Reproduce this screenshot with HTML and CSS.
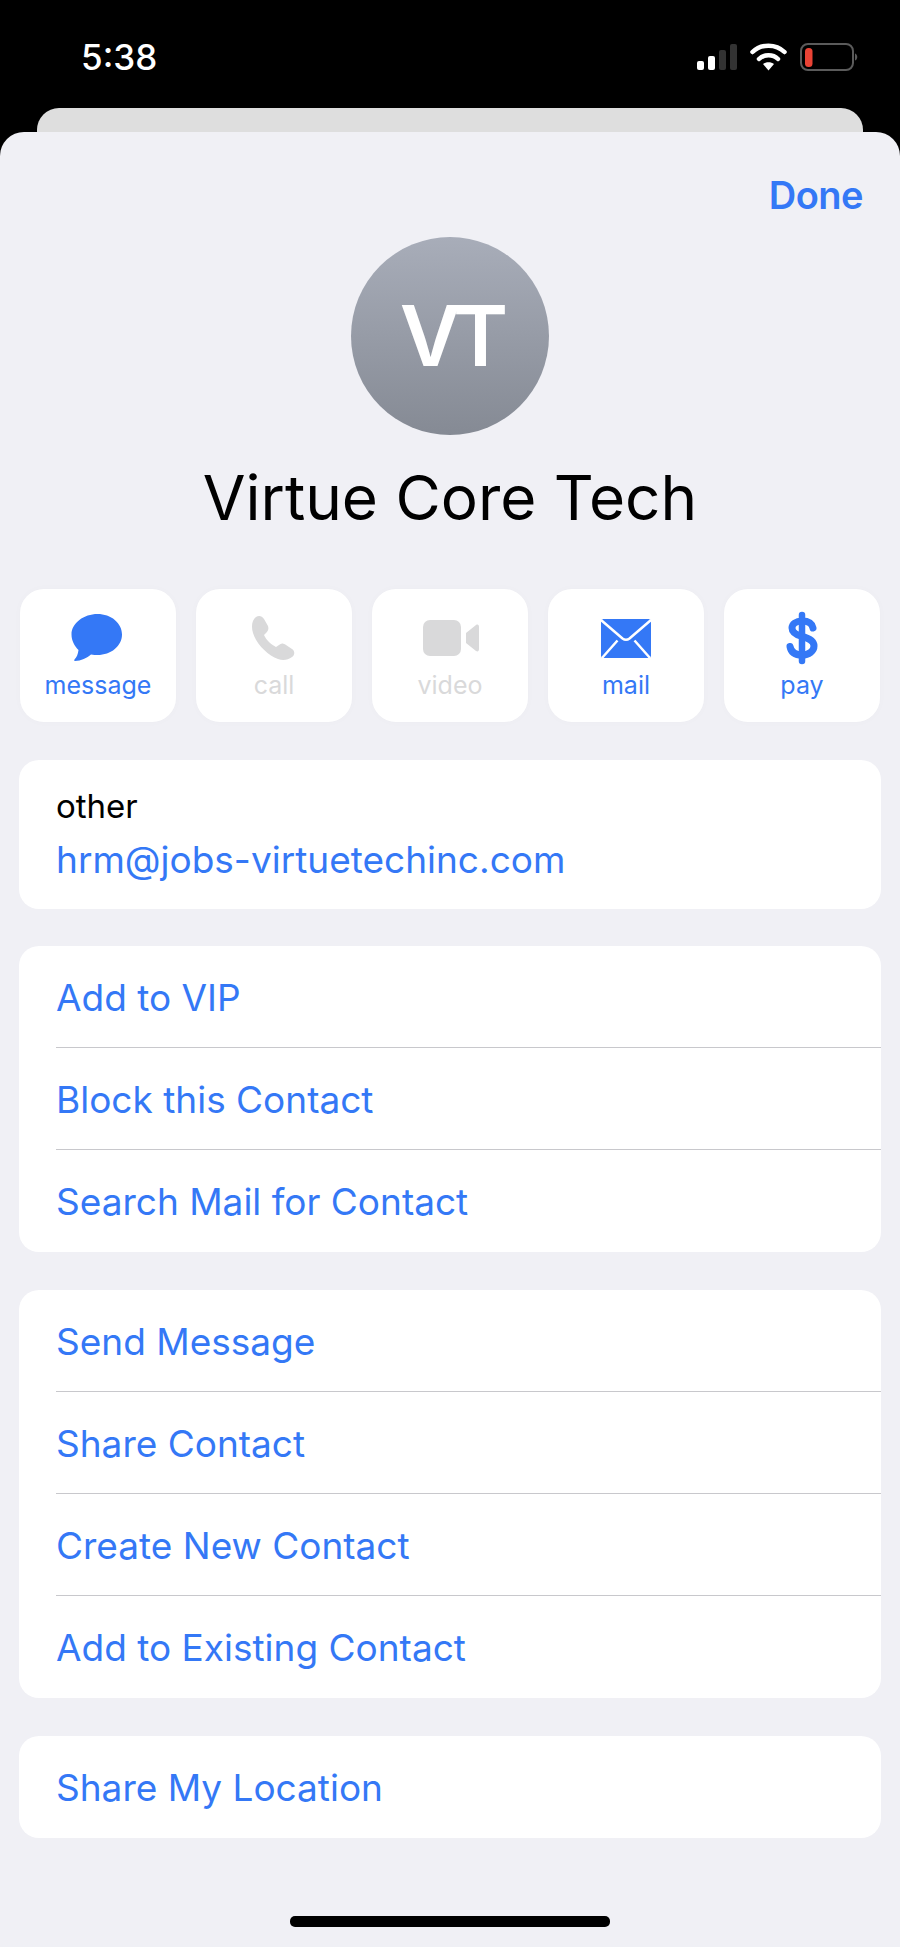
FILE: index.html
```html
<!DOCTYPE html>
<html lang="en">
<head>
	<meta charset="UTF-8">
	<title>Virtue Core Tech</title>
	<link rel="stylesheet" href="styles.css">
</head>
<body>
	<div class="phone">
		<div class="status">
			<div class="time">5:38</div>
			<div class="status_icons">
				<svg width="40" height="28" viewBox="0 0 40 28">
					<rect x="0" y="18" width="7" height="9" rx="2" fill="#fff"/>
					<rect x="11" y="13" width="7" height="14" rx="2" fill="#fff"/>
					<rect x="22" y="7" width="7" height="20" rx="2" fill="#333"/>
					<rect x="33" y="1" width="7" height="26" rx="2" fill="#333"/>
				</svg>
				<svg width="37" height="28" viewBox="0 0 37 28">
					<path d="M2.500 9 C11 0.500 26 0.500 34.500 9" fill="none" stroke="#fff" stroke-width="4.500" stroke-linecap="round"/>
					<path d="M9 16 C14 11 23 11 28 16" fill="none" stroke="#fff" stroke-width="4.500" stroke-linecap="round"/>
					<path d="M13 21 C16 18.500 21 18.500 24 21 L18.500 27.500 Z" fill="#fff"/>
				</svg>
				<svg width="58" height="28" viewBox="0 0 58 28">
					<rect x="1" y="1" width="52" height="26" rx="7" fill="none" stroke="#5b5b5b" stroke-width="2"/>
					<rect x="5" y="5" width="7.500" height="19" rx="3.500" fill="#ea4335"/>
					<path d="M55 10.500 C58 11.500 58 16.500 55 17.500 Z" fill="#5b5b5b"/>
				</svg>
			</div>
		</div>
		<div class="back_card"></div>
		<div class="sheet">
			<div class="done_row"><span class="done">Done</span></div>
			<div class="avatar">VT</div>
			<div class="name">Virtue Core Tech</div>
			<div class="actions">
				<div class="action">
					<svg width="54" height="48" viewBox="0 0 54 48"><path d="M26.500 0 C40 0 51 9 51 20.500 C51 32 40 41 26.500 41 C24.500 41 22.500 41 20 40.500 C16 44 10 47 4 47 C3 47 3 46 3.500 45.500 C5.500 43.500 7 40.500 7.500 36 C3.500 32 0.500 26.500 0.500 20.500 C0.500 9 13 0 26.500 0 Z" fill="#3478f6"/></svg>
					<span>message</span>
				</div>
				<div class="action off">
					<svg class="phone_icon" width="54" height="48" viewBox="0 0 54 48"><path d="M11 3 C14 1 17 2 19 5 L23 12 C24 15 23 17 21 19 L19 21 C21 26 27 31 31 33 L34 31 C36 29 38 29 41 31 L47 35 C50 37 50 41 47 43 C43 46 38 47 33 45 C23 41 12 31 8 19 C6 12 7 6 11 3 Z" fill="#d9d9da"/></svg>
					<span>call</span>
				</div>
				<div class="action off">
					<svg width="58" height="48" viewBox="0 0 58 48"><rect x="2" y="6" width="38" height="36" rx="7" fill="#d9d9da"/><path d="M45 19 L55 11 C57 10 58 11 58 13 L58 35 C58 37 57 38 55 37 L45 29 Z" fill="#d9d9da"/></svg>
					<span>video</span>
				</div>
				<div class="action">
					<svg width="54" height="48" viewBox="0 0 54 48">
						<rect x="2" y="5" width="50" height="39" rx="2.500" fill="#3478f6"/>
						<path d="M2 6 L23.500 24.500 C25.500 26 28.500 26 30.500 24.500 L52 6" fill="none" stroke="#fff" stroke-width="2.500"/>
						<path d="M3 44 L18.500 26.500 M51 44 L35.500 26.500" fill="none" stroke="#fff" stroke-width="2.500"/>
					</svg>
					<span>mail</span>
				</div>
				<div class="action">
					<svg width="54" height="56" class="dollar" viewBox="0 0 54 56"><path d="M38 18 C37 13 33 11 27 11 C21 11 17 14 17 18 C17 22 20 24.500 27 26.500 C35 28.500 39 31 39 36 C39 41 34 45 27 45 C20 45 16 42 15 36.500" fill="none" stroke="#3478f6" stroke-width="7" stroke-linecap="round"/><path d="M27 5 V51" stroke="#3478f6" stroke-width="6.500" stroke-linecap="round"/></svg>
					<span>pay</span>
				</div>
			</div>
			<div class="card email">
				<div class="label">other</div>
				<div class="link">hrm@jobs-virtuetechinc.com</div>
			</div>
			<div class="card card_close">
				<div class="row">Add to VIP</div>
				<div class="row">Block this Contact</div>
				<div class="row">Search Mail for Contact</div>
			</div>
			<div class="card">
				<div class="row">Send Message</div>
				<div class="row">Share Contact</div>
				<div class="row">Create New Contact</div>
				<div class="row">Add to Existing Contact</div>
			</div>
			<div class="card">
				<div class="row">Share My Location</div>
			</div>
			<div class="home_bar"></div>
		</div>
	</div>
</body>
</html>
```

FILE: styles.css
```css
*{padding:0;margin:0;box-sizing:border-box;}
body{
	width:900px;
	height:1947px;
	overflow:hidden;
	background:#000;
	font-family:Inter,"Liberation Sans",sans-serif;
}
.phone{
	width:900px;
	height:1947px;
	display:flex;
	flex-direction:column;
}
.status{
	height:108px;
	padding:38px 42px 0 81px;
	display:flex;
	justify-content:space-between;
	align-items:flex-start;
	color:#fff;
}
.time{
	font-size:35px;
	line-height:39px;
	font-weight:500;
}
.status_icons{
	display:flex;
	align-items:center;
	gap:13px;
	padding-top:5px;
}
.back_card{
	height:24px;
	margin:0 37px;
	background:#dedede;
	border-radius:22px 22px 0 0;
}
.sheet{
	flex:1;
	background:#f0f0f5;
	border-radius:24px 24px 0 0;
	padding:0 19px;
	display:flex;
	flex-direction:column;
	align-items:stretch;
}
.done_row{
	height:105px;
	padding:43px 18px 0 0;
	text-align:right;
}
.done{
	color:#3478f6;
	font-size:38px;
	line-height:41px;
	font-weight:600;
	letter-spacing:-0.5px;
}
.avatar{
	width:198px;
	height:198px;
	margin:0 auto;
	border-radius:50%;
	background:linear-gradient(#a8adb9,#858a94);
	color:#fff;
	font-size:84px;
	font-weight:600;
	letter-spacing:-8px;
	line-height:198px;
	text-align:center;
}
.name{
	margin-top:30px;
	height:66px;
	font-size:62px;
	line-height:66px;
	text-align:center;
	color:#000;
}
.actions{
	margin:58px 1px 0;
	display:flex;
	gap:20px;
}
.action{
	width:156px;
	height:133px;
	background:#fff;
	border-radius:24px;
	box-shadow:0 0 10px rgba(0,0,0,.02);
	color:#3478f6;
	font-size:25px;
	display:flex;
	flex-direction:column;
	align-items:center;
	padding-top:25px;
}
.action span{
	margin-top:9px;
	line-height:28px;
}
.action svg{
	display:block;
}
.action .dollar{
	margin-top:-4px;
	margin-bottom:-4px;
}
.action .phone_icon{
	margin-left:-4px;
}
.off{
	color:#d9d9da;
}
.card{
	background:#fff;
	border-radius:20px;
	margin-top:38px;
	padding-left:37px;
}
.card_close{
	margin-top:37px;
}
.email{
	height:149px;
	padding-top:26px;
}
.label{
	font-size:33px;
	line-height:40px;
	color:#000;
}
.link{
	font-size:37px;
	line-height:44px;
	margin-top:12px;
	color:#3478f6;
}
.row{
	height:102px;
	padding-top:1px;
	line-height:102px;
	font-size:37px;
	color:#3478f6;
	border-bottom:1px solid #c8c8cc;
}
.row:last-child{
	border-bottom:0;
}
.home_bar{
	width:320px;
	height:11px;
	border-radius:5px;
	background:#000;
	margin:78px auto 0;
}
```
